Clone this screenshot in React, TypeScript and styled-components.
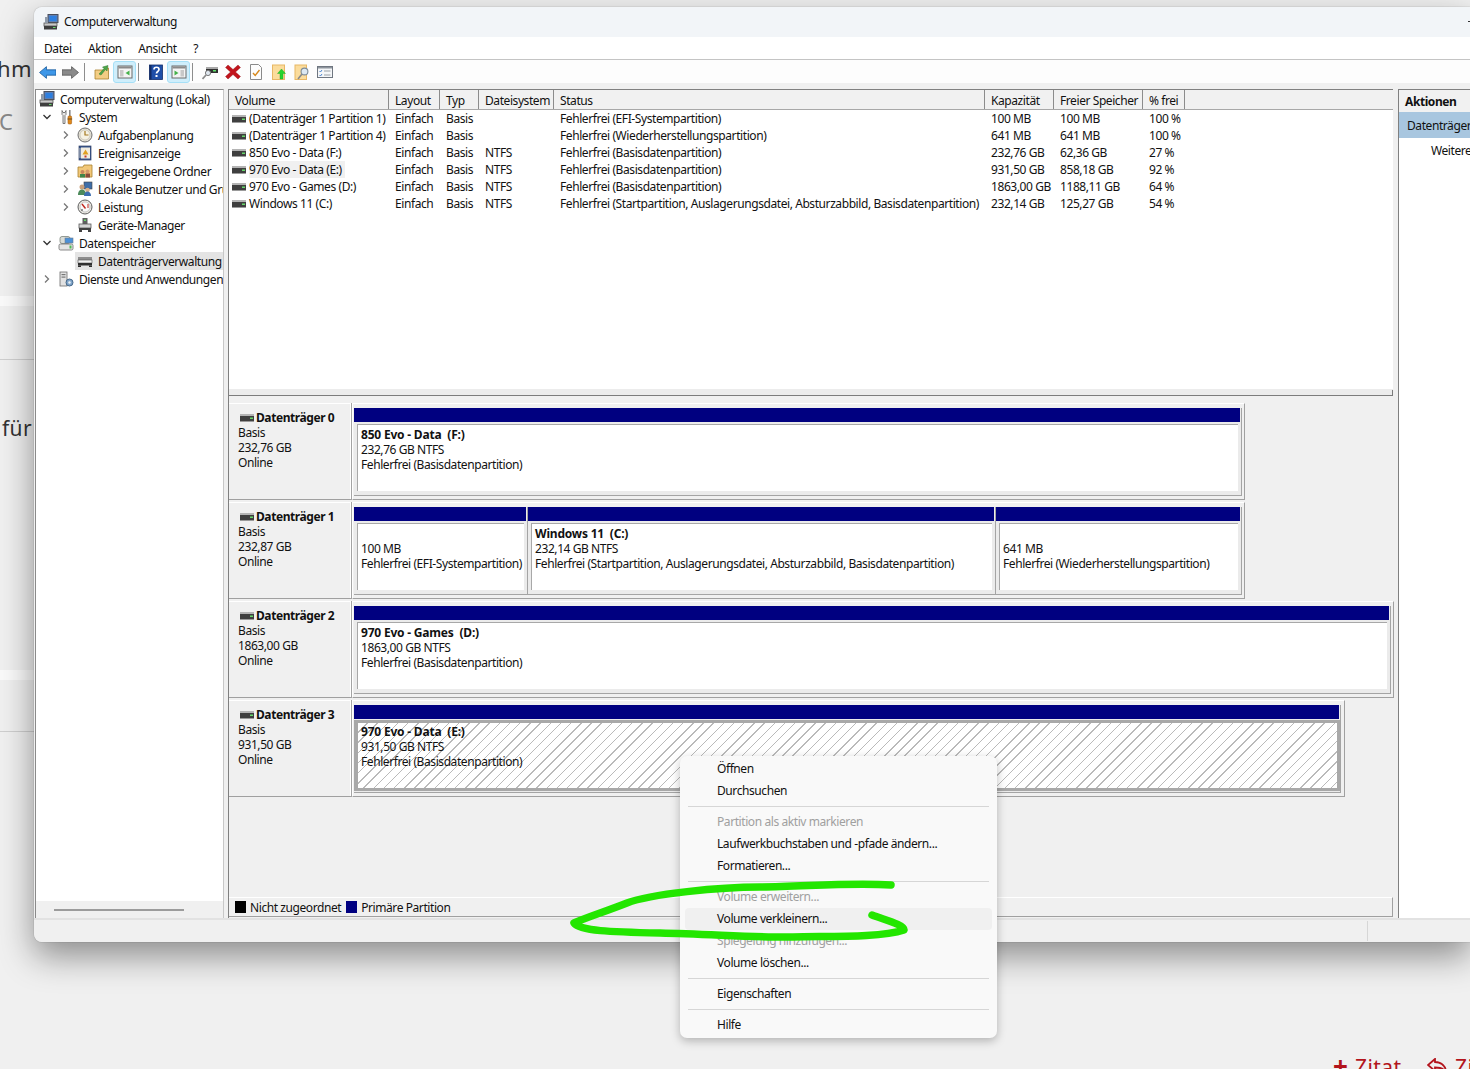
import React from 'react';
import styled, { createGlobalStyle } from 'styled-components';

const GlobalStyle = createGlobalStyle`
  html, body { margin: 0; padding: 0; background: #f0f0f0; }
  * { box-sizing: border-box; }
`;

const DiskGlyph = () => (
  <svg width="14" height="8" viewBox="0 0 14 8">
    <rect x="0" y="0" width="14" height="2" fill="#b4b4b4" />
    <rect x="0" y="2" width="14" height="5" fill="#3f3f3f" />
    <rect x="10" y="3.5" width="3" height="1.5" fill="#66d86a" />
    <rect x="0" y="7" width="14" height="1" fill="#9a9a9a" />
  </svg>
);

const glyphs: Record<string, React.ReactNode> = {
  computer: (
    <>
      <rect x="5" y="0.5" width="10" height="8" fill="#5d7fb5" stroke="#4a4f5c" />
      <rect x="6.5" y="2" width="7" height="5" fill="#2d7fe0" />
      <rect x="1" y="9" width="13" height="3" fill="#c9c9c9" stroke="#555" strokeWidth="0.8" />
      <rect x="1" y="12" width="13" height="3.5" fill="#3e3e3e" />
      <rect x="2" y="3" width="3" height="6" fill="#8f9aa8" />
      <rect x="10" y="13" width="2.5" height="1" fill="#66d86a" />
    </>
  ),
  tools: (
    <>
      <path d="M4 1.5v4l1 1v8h2v-8l1-1v-4l-1 2H5z" fill="#e8e8e8" stroke="#606060" strokeWidth="0.8" />
      <rect x="11" y="1" width="1.6" height="6" fill="#8a8a8a" />
      <rect x="10" y="7" width="3.6" height="8" rx="1" fill="#e08a1c" stroke="#a85f10" strokeWidth="0.6" />
      <rect x="9.5" y="9.5" width="4.6" height="1" fill="#6a4a1a" />
    </>
  ),
  clock: (
    <>
      <circle cx="8" cy="8" r="7" fill="#e6e2d6" stroke="#6f6f6f" />
      <circle cx="8" cy="8" r="5" fill="#f6f2e4" stroke="#b9b5a8" strokeWidth="0.6" />
      <path d="M8 4v4h3.5" fill="none" stroke="#a5781f" strokeWidth="1.2" />
    </>
  ),
  events: (
    <>
      <rect x="2" y="1" width="12" height="14" fill="#39588f" stroke="#2e3e63" strokeWidth="0.7" />
      <rect x="4" y="2.5" width="9" height="11" fill="#f0ece0" />
      <path d="M8.5 4.5l3 5h-6z" fill="#e0a020" />
      <rect x="7.5" y="10.5" width="2" height="2" fill="#c0392b" />
      <rect x="2.5" y="3" width="1" height="10" fill="#c8c8c8" />
    </>
  ),
  shared: (
    <>
      <path d="M1 4h5l1-2h8v12H1z" fill="#f2c879" stroke="#a8812f" strokeWidth="0.8" />
      <circle cx="5.5" cy="9" r="2" fill="#c9875c" />
      <rect x="3" y="11" width="5" height="3.5" fill="#41844a" />
      <circle cx="10.5" cy="8.5" r="2" fill="#d59a6c" />
      <rect x="8.5" y="10.5" width="4.5" height="4" fill="#8c4a3a" />
    </>
  ),
  users: (
    <>
      <rect x="7" y="1" width="8" height="7" fill="#3e6ea8" stroke="#444" strokeWidth="0.6" />
      <circle cx="5" cy="6" r="2.5" fill="#c9a07a" />
      <path d="M1 14c0-4 2-5.5 4-5.5S9 10 9 14z" fill="#4d8a5a" />
      <circle cx="10.5" cy="9" r="2.3" fill="#d8b08a" />
      <path d="M7 15c0-3 1.500-4.500 3.500-4.500S14 12 14 15z" fill="#3d6fb0" />
    </>
  ),
  gauge: (
    <>
      <circle cx="8" cy="8" r="7" fill="#eceae4" stroke="#5e5e5e" />
      <circle cx="8" cy="8" r="5" fill="#fafafa" stroke="#a9a9a9" strokeWidth="0.6" />
      <path d="M5 5l3.500 4.500" stroke="#c0261c" strokeWidth="1.4" />
      <path d="M11 5v4" stroke="#c0261c" strokeWidth="1" />
      <path d="M4 11h2" stroke="#3a3a3a" strokeWidth="1" />
    </>
  ),
  device: (
    <>
      <rect x="5.500" y="1" width="5" height="6" fill="#606060" />
      <rect x="7" y="2.500" width="2" height="1.500" fill="#66d86a" />
      <rect x="2" y="7" width="12" height="4" fill="#d6d6d6" stroke="#5a5a5a" strokeWidth="0.8" />
      <rect x="2" y="11" width="12" height="2" fill="#404040" />
      <rect x="2" y="13" width="3" height="2" fill="#404040" />
      <rect x="11" y="13" width="3" height="2" fill="#404040" />
    </>
  ),
  storage: (
    <>
      <rect x="2" y="1.500" width="10" height="7" rx="2" fill="#d8dcd8" stroke="#7c847c" strokeWidth="0.8" />
      <rect x="7" y="3" width="8" height="5" fill="#4a90d8" stroke="#6d7d90" strokeWidth="0.6" />
      <rect x="1" y="9" width="14" height="6" rx="1.500" fill="#e4e4e4" stroke="#6e6e6e" strokeWidth="0.8" />
      <rect x="11.500" y="10.500" width="2" height="3" fill="#4fbb55" />
    </>
  ),
  diskmgmt: (
    <>
      <rect x="1" y="4" width="14" height="3" fill="#8e8e8e" />
      <rect x="1" y="7" width="14" height="3" fill="#f0f0f0" stroke="#555" strokeWidth="0.6" />
      <rect x="1" y="10" width="14" height="2.500" fill="#2f2f2f" />
      <rect x="1" y="12.500" width="3" height="1.500" fill="#2f2f2f" />
      <rect x="12" y="12.500" width="3" height="1.500" fill="#2f2f2f" />
    </>
  ),
  services: (
    <>
      <rect x="2" y="1" width="7" height="14" fill="#e2e2e2" stroke="#6d6d6d" strokeWidth="0.8" />
      <rect x="3.500" y="3" width="4" height="1.200" fill="#777" />
      <rect x="3.500" y="5.500" width="4" height="1.200" fill="#777" />
      <circle cx="11.500" cy="11.500" r="3.500" fill="#7fa4c9" stroke="#48698a" />
      <circle cx="11.500" cy="11.500" r="1.200" fill="#eef3f8" />
    </>
  ),
  back: <path d="M0.500 8L7 2.500V5.500H16V10.500H7V13.500Z" fill="#3e97e8" stroke="#1e5f9e" strokeWidth="0.8" />,
  forward: <path d="M15.500 8L9 2.500V5.500H0V10.500H9V13.500Z" fill="#8a8a8a" stroke="#5c5c5c" strokeWidth="0.8" />,
  folderUp: (
    <>
      <path d="M1 6h9l1-2h3.500v11H1z" fill="#f3cd84" stroke="#a8812f" strokeWidth="0.8" />
      <path d="M5 10l5-5.500L8.500 3 14 1.500 13 7l-1.500-1.500L7 11z" fill="#4ea54a" stroke="#2f7a2f" strokeWidth="0.5" />
    </>
  ),
  panelLeft: (
    <>
      <rect x="1" y="2" width="14" height="12" fill="#f4f4f4" stroke="#6a6a6a" />
      <rect x="1.500" y="2.500" width="13" height="2" fill="#8a8a8a" />
      <rect x="3" y="6" width="3.500" height="6.500" fill="#c8c8c8" />
      <path d="M12.500 6.500v5L8.500 9z" fill="#45b24b" />
    </>
  ),
  panelRight: (
    <>
      <rect x="1" y="2" width="14" height="12" fill="#f4f4f4" stroke="#6a6a6a" />
      <rect x="1.500" y="2.500" width="13" height="2" fill="#8a8a8a" />
      <rect x="9.500" y="6" width="3.500" height="6.500" fill="#c8c8c8" />
      <path d="M3.500 6.500v5L7.500 9z" fill="#45b24b" />
    </>
  ),
  help: (
    <>
      <rect x="1.500" y="1" width="13" height="14.500" fill="#1f4fa8" stroke="#14306a" strokeWidth="0.8" />
      <rect x="1.500" y="1" width="2" height="14.500" fill="#122b63" />
      <path d="M6 5.500c0-3 5-3 5 0 0 2-2.500 2-2.500 4" fill="none" stroke="#fff" strokeWidth="1.700" />
      <rect x="7.500" y="11" width="2" height="2" fill="#fff" />
    </>
  ),
  connect: (
    <>
      <rect x="4" y="3" width="12" height="2" fill="#a8a8a8" />
      <rect x="4" y="5" width="12" height="4" fill="#303030" />
      <rect x="11" y="6" width="3" height="1.500" fill="#5fe06a" />
      <circle cx="6" cy="9" r="2.600" fill="#dfe7ef" stroke="#7b7b7b" />
      <path d="M4 11L0.500 15" stroke="#8b8b8b" strokeWidth="1.800" />
    </>
  ),
  remove: <path d="M3 1l5 4.500L13 1l2.500 2.500L10.500 8l5 4.500L13 15 8 10.500 3 15 .5 12.500 5.500 8 .5 3.500z" fill="#c2141c" stroke="#8f1016" strokeWidth="0.4" />,
  props: (
    <>
      <path d="M2.500 .5h8l3 3v12h-11z" fill="#fdfdfd" stroke="#8a8a8a" />
      <path d="M5 9l2.200 2.500L11.500 6" fill="none" stroke="#d88a1e" strokeWidth="1.400" />
    </>
  ),
  folderExport: (
    <>
      <rect x="1.500" y="1" width="12" height="14.500" fill="#fbdc9c" stroke="#e8b765" />
      <path d="M10.500 5l4 4.500H12V15H9V9.500H6.500z" fill="#27d52e" stroke="#1aa022" strokeWidth="0.4" />
    </>
  ),
  folderSearch: (
    <>
      <rect x="1" y="1" width="11.500" height="14.500" fill="#fbdc9c" stroke="#e8b765" />
      <circle cx="10.500" cy="7.500" r="3.400" fill="#dce8f2" stroke="#7d8c99" strokeWidth="1.100" />
      <path d="M8 10L4 15" stroke="#8a8a8a" strokeWidth="1.600" />
    </>
  ),
  checklist: (
    <>
      <rect x="0.500" y="2.500" width="15" height="11" fill="#f4f6f8" stroke="#6f7680" />
      <rect x="1" y="3" width="14" height="1.500" fill="#8d949c" />
      <path d="M2.500 7l1 1 1.500-2M2.500 11l1 1 1.500-2" fill="none" stroke="#3b79c9" strokeWidth="0.9" />
      <path d="M7 7h6.500M7 11h6.500" stroke="#9aa0a6" strokeWidth="1" />
    </>
  ),
};

const Glyph = ({ name, size = 16 }: { name: string; size?: number }) => (
  <svg width={size} height={size} viewBox="0 0 16 16">
    {glyphs[name]}
  </svg>
);

const Chevron = ({ open }: { open: boolean }) => (
  <svg width="10" height="10" viewBox="0 0 10 10">
    <path
      d={open ? 'M1.500 3l3.500 3.500L8.500 3' : 'M3 1.500L6.500 5 3 8.500'}
      fill="none"
      stroke={open ? '#333' : '#777'}
      strokeWidth="1.300"
    />
  </svg>
);

const treeRows = [
  { label: 'Computerverwaltung (Lokal)', icon: 'computer', depth: 0 },
  { label: 'System', icon: 'tools', depth: 1, chevron: 'open' },
  { label: 'Aufgabenplanung', icon: 'clock', depth: 2, chevron: 'closed' },
  { label: 'Ereignisanzeige', icon: 'events', depth: 2, chevron: 'closed' },
  { label: 'Freigegebene Ordner', icon: 'shared', depth: 2, chevron: 'closed' },
  { label: 'Lokale Benutzer und Gruppen', icon: 'users', depth: 2, chevron: 'closed' },
  { label: 'Leistung', icon: 'gauge', depth: 2, chevron: 'closed' },
  { label: 'Geräte-Manager', icon: 'device', depth: 2 },
  { label: 'Datenspeicher', icon: 'storage', depth: 1, chevron: 'open' },
  { label: 'Datenträgerverwaltung', icon: 'diskmgmt', depth: 2, selected: true },
  { label: 'Dienste und Anwendungen', icon: 'services', depth: 1, chevron: 'closed' },
];

const columns = ['Volume', 'Layout', 'Typ', 'Dateisystem', 'Status', 'Kapazität', 'Freier Speicher', '% frei'];

const volumes = [
  ['(Datenträger 1 Partition 1)', 'Einfach', 'Basis', '', 'Fehlerfrei (EFI-Systempartition)', '100 MB', '100 MB', '100 %'],
  ['(Datenträger 1 Partition 4)', 'Einfach', 'Basis', '', 'Fehlerfrei (Wiederherstellungspartition)', '641 MB', '641 MB', '100 %'],
  ['850 Evo - Data (F:)', 'Einfach', 'Basis', 'NTFS', 'Fehlerfrei (Basisdatenpartition)', '232,76 GB', '62,36 GB', '27 %'],
  ['970 Evo - Data (E:)', 'Einfach', 'Basis', 'NTFS', 'Fehlerfrei (Basisdatenpartition)', '931,50 GB', '858,18 GB', '92 %'],
  ['970 Evo - Games (D:)', 'Einfach', 'Basis', 'NTFS', 'Fehlerfrei (Basisdatenpartition)', '1863,00 GB', '1188,11 GB', '64 %'],
  ['Windows 11 (C:)', 'Einfach', 'Basis', 'NTFS', 'Fehlerfrei (Startpartition, Auslagerungsdatei, Absturzabbild, Basisdatenpartition)', '232,14 GB', '125,27 GB', '54 %'],
];

const disks = [
  {
    name: 'Datenträger 0',
    size: '232,76 GB',
    width: 893,
    parts: [{ title: '850 Evo - Data  (F:)', size: '232,76 GB NTFS', status: 'Fehlerfrei (Basisdatenpartition)', width: 888 }],
  },
  {
    name: 'Datenträger 1',
    size: '232,87 GB',
    width: 893,
    parts: [
      { title: '', size: '100 MB', status: 'Fehlerfrei (EFI-Systempartition)', width: 174 },
      { title: 'Windows 11  (C:)', size: '232,14 GB NTFS', status: 'Fehlerfrei (Startpartition, Auslagerungsdatei, Absturzabbild, Basisdatenpartition)', width: 468 },
      { title: '', size: '641 MB', status: 'Fehlerfrei (Wiederherstellungspartition)', width: 246 },
    ],
  },
  {
    name: 'Datenträger 2',
    size: '1863,00 GB',
    width: 1042,
    parts: [{ title: '970 Evo - Games  (D:)', size: '1863,00 GB NTFS', status: 'Fehlerfrei (Basisdatenpartition)', width: 1038 }],
  },
  {
    name: 'Datenträger 3',
    size: '931,50 GB',
    width: 993,
    parts: [{ title: '970 Evo - Data  (E:)', size: '931,50 GB NTFS', status: 'Fehlerfrei (Basisdatenpartition)', width: 987, selected: true }],
  },
];

const menuGroups = [
  [{ label: 'Öffnen' }, { label: 'Durchsuchen' }],
  [
    { label: 'Partition als aktiv markieren', disabled: true },
    { label: 'Laufwerkbuchstaben und -pfade ändern...' },
    { label: 'Formatieren...' },
  ],
  [
    { label: 'Volume erweitern...', disabled: true },
    { label: 'Volume verkleinern...', hover: true },
    { label: 'Spiegelung hinzufügen...', disabled: true },
    { label: 'Volume löschen...' },
  ],
  [{ label: 'Eigenschaften' }],
  [{ label: 'Hilfe' }],
];

const App = () => (
  <Page>
    <GlobalStyle />
    <BackdropText $x={-3} $y={53} $size={22}>hm</BackdropText>
    <BackdropText $x={-1} $y={106} $size={22} $faded>C</BackdropText>
    <BackdropText $x={2} $y={413} $size={21}>für</BackdropText>
    <BackdropBand $y={296} $height={10} $color="#fafafa" />
    <BackdropBand $y={359} $height={1} $color="#cfcfcf" />
    <BackdropBand $y={670} $height={10} $color="#fafafa" />
    <BackdropBand $y={731} $height={1} $color="#cfcfcf" />
    <BackdropText $x={1333} $y={1051} $size={26} $red $bold>+</BackdropText>
    <BackdropText $x={1355} $y={1052} $size={21} $red>Zitat</BackdropText>
    <ReplyArrow width="22" height="16" viewBox="0 0 22 16">
      <path d="M8 1L1 7l7 6V9.500c5 0 9 1 11 5 0-6-4-10-11-10.500z" fill="none" stroke="#b3141c" strokeWidth="1.800" />
    </ReplyArrow>
    <BackdropText $x={1455} $y={1052} $size={21} $red>Zi</BackdropText>

    <Window>
      <TitleBar>
        <Glyph name="computer" />
        <span>Computerverwaltung</span>
        <TitleDash />
      </TitleBar>
      <MenuBar>
        <span>Datei</span>
        <span>Aktion</span>
        <span>Ansicht</span>
        <span>?</span>
      </MenuBar>
      <ToolBar>
        <ToolButton><Glyph name="back" size={17} /></ToolButton>
        <ToolButton><Glyph name="forward" size={17} /></ToolButton>
        <ToolSeparator />
        <ToolButton><Glyph name="folderUp" /></ToolButton>
        <ToolButton $active><Glyph name="panelLeft" /></ToolButton>
        <ToolSeparator />
        <ToolButton><Glyph name="help" /></ToolButton>
        <ToolButton $active><Glyph name="panelRight" /></ToolButton>
        <ToolSeparator />
        <ToolButton><Glyph name="connect" /></ToolButton>
        <ToolButton><Glyph name="remove" /></ToolButton>
        <ToolButton><Glyph name="props" /></ToolButton>
        <ToolButton><Glyph name="folderExport" /></ToolButton>
        <ToolButton><Glyph name="folderSearch" /></ToolButton>
        <ToolButton><Glyph name="checklist" /></ToolButton>
      </ToolBar>

      <Content>
        <TreePane>
          <TreeList>
            {treeRows.map((row) => (
              <TreeRow key={row.label} $depth={row.depth}>
                {row.depth > 0 && (
                  <ChevronBox>{row.chevron && <Chevron open={row.chevron === 'open'} />}</ChevronBox>
                )}
                <TreeLabel $selected={row.selected}>
                  <Glyph name={row.icon} />
                  <span>{row.label}</span>
                </TreeLabel>
              </TreeRow>
            ))}
          </TreeList>
          <TreeScroll>
            <TreeThumb />
          </TreeScroll>
        </TreePane>

        <CenterPane>
          <TablePane>
            <VolumeTable>
              <HeaderRow>
                {columns.map((col) => (
                  <HeaderCell key={col}>{col}</HeaderCell>
                ))}
              </HeaderRow>
              {volumes.map((row) => (
                <VolumeRow key={row[0]}>
                  {row.map((cell, i) =>
                    i === 0 ? (
                      <VolumeName key={i}>
                        <DiskGlyph />
                        <VolumeText $selected={cell.startsWith('970 Evo - Data')}>{cell}</VolumeText>
                      </VolumeName>
                    ) : (
                      <Cell key={i}>{cell}</Cell>
                    ),
                  )}
                </VolumeRow>
              ))}
            </VolumeTable>
          </TablePane>

          <DiskPane>
            <DiskList>
              {disks.map((disk) => (
                <DiskRow key={disk.name}>
                  <DiskLabel>
                    <DiskTitle>
                      <DiskGlyph />
                      <b>{disk.name}</b>
                    </DiskTitle>
                    <div>Basis</div>
                    <div>{disk.size}</div>
                    <div>Online</div>
                  </DiskLabel>
                  <DiskTrack $width={disk.width}>
                    {disk.parts.map((part) => (
                      <Partition key={part.size} $width={part.width}>
                        <PartitionBar />
                        <PartitionBody $selected={part.selected}>
                          <PartitionTitle>{part.title}</PartitionTitle>
                          <PartitionLine>{part.size}</PartitionLine>
                          <PartitionLine>{part.status}</PartitionLine>
                        </PartitionBody>
                      </Partition>
                    ))}
                  </DiskTrack>
                </DiskRow>
              ))}
            </DiskList>
            <Legend>
              <LegendSwatch $color="#000" />
              <span>Nicht zugeordnet</span>
              <LegendSwatch $color="#000080" />
              <span>Primäre Partition</span>
            </Legend>
          </DiskPane>
        </CenterPane>

        <ActionPane>
          <ActionHeader>Aktionen</ActionHeader>
          <ActionGroup>Datenträgerverwaltung</ActionGroup>
          <ActionItem>Weitere Aktionen</ActionItem>
        </ActionPane>
      </Content>

      <StatusBar>
        <StatusDivider />
      </StatusBar>
    </Window>

    <ContextMenu>
      {menuGroups.map((group, i) => (
        <React.Fragment key={group[0].label}>
          {i > 0 && <MenuSeparator />}
          {group.map((item) => (
            <MenuItem key={item.label} $disabled={item.disabled} $hover={item.hover}>
              {item.label}
            </MenuItem>
          ))}
        </React.Fragment>
      ))}
    </ContextMenu>

    <Scribble viewBox="0 0 1470 1069">
      <path
        d="M891 885C850 882 800 887 760 887S650 894 627 903S585 918 574 923C580 931 610 932 660 933S760 938 793 937S880 938 904 930C905 925 885 920 872 915"
        fill="none"
        stroke="#23e600"
        strokeWidth="7.500"
        strokeLinecap="round"
        strokeLinejoin="round"
      />
    </Scribble>
  </Page>
);

export default App;

const uiFont = `"Noto Sans", "Liberation Sans", sans-serif`;

const Page = styled.div`
  position: relative;
  width: 1470px;
  height: 1069px;
  padding: 7px 0 0 34px;
  overflow: hidden;
  background: #f0f0f0;
  font-family: ${uiFont};
  font-size: 12px;
  letter-spacing: -0.42px;
  color: #111;
`;

const BackdropText = styled.div<{ $x: number; $y: number; $size: number; $faded?: boolean; $red?: boolean; $bold?: boolean }>`
  position: absolute;
  left: ${(p) => p.$x}px;
  top: ${(p) => p.$y}px;
  font-size: ${(p) => p.$size}px;
  font-weight: ${(p) => (p.$bold ? 700 : 400)};
  line-height: 30px;
  letter-spacing: 0.4px;
  white-space: nowrap;
  color: ${(p) => (p.$red ? '#b3141c' : p.$faded ? '#888' : '#333')};
`;

const BackdropBand = styled.div<{ $y: number; $height: number; $color: string }>`
  position: absolute;
  left: 0;
  top: ${(p) => p.$y}px;
  width: 34px;
  height: ${(p) => p.$height}px;
  background: ${(p) => p.$color};
`;

const ReplyArrow = styled.svg`
  position: absolute;
  left: 1427px;
  top: 1058px;
`;

const Window = styled.div`
  position: relative;
  display: flex;
  flex-direction: column;
  width: 1436px;
  height: 935px;
  background: #f0f0f0;
  border-radius: 8px 0 0 8px;
  box-shadow: 0 14px 34px rgba(0, 0, 0, 0.42), 0 0 1px rgba(0, 0, 0, 0.5);
  overflow: hidden;
`;

const TitleBar = styled.div`
  display: flex;
  align-items: center;
  gap: 5px;
  height: 30px;
  padding: 0 0 1px 9px;
  background: #f2f5f8;
`;

const TitleDash = styled.div`
  width: 2px;
  height: 1px;
  margin-left: auto;
  background: #333;
`;

const MenuBar = styled.div`
  display: flex;
  align-items: center;
  gap: 16.500px;
  height: 23px;
  padding-left: 10px;
  background: #fff;
  border-bottom: 1px solid #c4c4c4;
`;

const ToolBar = styled.div`
  display: flex;
  align-items: center;
  height: 23px;
  padding: 1px 0 0 2px;
  background: #fdfdfd;
`;

const ToolButton = styled.div<{ $active?: boolean }>`
  display: flex;
  align-items: center;
  justify-content: center;
  width: 23px;
  height: 22px;
  border-radius: 3px;
  background: ${(p) => (p.$active ? '#cfeefb' : 'transparent')};
  border: 1px solid ${(p) => (p.$active ? '#a6e0f7' : 'transparent')};
`;

const ToolSeparator = styled.div`
  width: 1px;
  height: 18px;
  margin: 0 5px 0 2px;
  background: #8d8d8d;
`;

const Content = styled.div`
  display: flex;
  flex: 1;
  min-height: 0;
  padding: 6px 0 0 1px;
  gap: 4px;
`;

const TreePane = styled.div`
  display: flex;
  flex-direction: column;
  width: 189px;
  background: #fff;
  border-top: 1px solid #8a8a8a;
  border-left: 1px solid #8a8a8a;
  border-right: 1px solid #c8c8c8;
`;

const TreeList = styled.div`
  flex: 1;
`;

const TreeRow = styled.div<{ $depth: number }>`
  display: flex;
  align-items: center;
  height: 18px;
  overflow: hidden;
  white-space: nowrap;
  padding-left: ${(p) => [1, 5, 24][p.$depth]}px;
`;

const ChevronBox = styled.div`
  display: flex;
  flex: none;
  align-items: center;
  justify-content: center;
  width: 12px;
  height: 12px;
  margin-right: 3px;
`;

const TreeLabel = styled.div<{ $selected?: boolean }>`
  display: flex;
  align-items: center;
  gap: 5px;
  padding-left: 2px;
  padding-right: 2px;
  height: 18px;
  background: ${(p) => (p.$selected ? '#e4e4e4' : 'transparent')};
`;

const TreeScroll = styled.div`
  display: flex;
  align-items: center;
  height: 17px;
  padding-left: 18px;
  background: #f0f0f0;
`;

const TreeThumb = styled.div`
  width: 130px;
  height: 2px;
  background: #9c9c9c;
`;

const CenterPane = styled.div`
  display: flex;
  flex-direction: column;
  width: 1166px;
  border-left: 1px solid #808080;
`;

const TablePane = styled.div`
  position: relative;
  height: 307px;
  margin-right: 1px;
  padding-bottom: 6px;
  background: #ececec;
  border-top: 1px solid #808080;
  border-bottom: 1px solid #7c7c7c;

  &::after {
    content: '';
    position: absolute;
    right: 0;
    bottom: 0;
    width: 1px;
    height: 5px;
    background: #7c7c7c;
  }
`;

const VolumeTable = styled.div`
  height: 100%;
  background: #fff;
`;

const tableColumns = '160px 51px 39px 75px 431px 69px 89px 42px';

const HeaderRow = styled.div`
  display: grid;
  grid-template-columns: ${tableColumns};
  height: 20px;
  background: #f1f1f1;
  border-bottom: 1px solid #a8a8a8;
`;

const HeaderCell = styled.div`
  display: flex;
  align-items: center;
  padding: 2px 0 0 6px;
  white-space: nowrap;
  border-right: 1px solid #8c8c8c;
`;

const VolumeRow = styled.div`
  display: grid;
  grid-template-columns: ${tableColumns};
  height: 17px;
  align-items: center;
`;

const Cell = styled.div`
  padding-left: 6px;
  white-space: nowrap;
`;

const VolumeName = styled.div`
  display: flex;
  align-items: center;
  padding-left: 3px;
  white-space: nowrap;
`;

const VolumeText = styled.span<{ $selected?: boolean }>`
  margin-left: 3px;
  padding-right: 3px;
  background: ${(p) => (p.$selected ? '#f0f0f0' : 'transparent')};
`;

const DiskPane = styled.div`
  display: flex;
  flex: 1;
  flex-direction: column;
  min-height: 0;
  padding-top: 7px;
`;

const DiskList = styled.div`
  display: flex;
  flex-direction: column;
  gap: 2px;
`;

const DiskRow = styled.div`
  display: flex;
  height: 97px;
`;

const DiskLabel = styled.div`
  width: 123px;
  padding: 7px 0 0 9px;
  line-height: 15px;
  border-right: 1px solid #a4a4a4;
  border-bottom: 1px solid #a0a0a0;
  box-shadow: inset -1px 0 0 #fff, inset 0 1px 0 #fff;
`;

const DiskTitle = styled.div`
  display: flex;
  align-items: center;
  gap: 2px;
  padding-left: 2px;
  font-size: 12px;
`;

const DiskTrack = styled.div<{ $width: number }>`
  display: flex;
  width: ${(p) => p.$width}px;
  padding: 4px 2px 3px 1px;
  border-top: 1px solid #fff;
  border-left: 1px solid #fff;
  border-right: 1px solid #a0a0a0;
  border-bottom: 1px solid #a0a0a0;
`;

const Partition = styled.div<{ $width: number }>`
  display: flex;
  flex-direction: column;
  width: ${(p) => p.$width}px;
  background: #ebebeb;
  border-right: 1px solid #a4a4a4;
  border-bottom: 1px solid #a4a4a4;
`;

const PartitionBar = styled.div`
  flex: none;
  height: 14px;
  margin-right: 1px;
  background: #000080;
`;

const PartitionBody = styled.div<{ $selected?: boolean }>`
  flex: 1;
  margin: ${(p) => (p.$selected ? '1px 0 1px 0' : '2px 3px 4px 3px')};
  padding: ${(p) => (p.$selected ? '1px 0 0 3px' : '2px 0 0 3px')};
  line-height: 15px;
  overflow: hidden;
  white-space: nowrap;
  background: ${(p) =>
    p.$selected
      ? 'repeating-linear-gradient(135deg, #fff 0 6.200px, #bababa 6.200px 7.200px)'
      : '#fff'};
  border-style: solid;
  border-color: ${(p) => (p.$selected ? '#a8a8a8' : '#a8a8a8 #fff #fff #a8a8a8')};
  border-width: ${(p) => (p.$selected ? '3px 3px 3px 4px' : '1px 0 0 1px')};
`;

const PartitionTitle = styled.div`
  min-height: 15px;
  font-weight: 700;
  letter-spacing: -0.2px;
  white-space: pre;
`;

const PartitionLine = styled.div`
  min-height: 15px;
`;

const Legend = styled.div`
  display: flex;
  align-items: center;
  height: 20px;
  margin-top: auto;
  margin-bottom: 1px;
  margin-right: 1px;
  padding-left: 6px;
  border-top: 1px solid #fff;
  border-right: 1px solid #a0a0a0;
  border-bottom: 1px solid #a0a0a0;

  span {
    margin-right: 5px;
  }
`;

const LegendSwatch = styled.div<{ $color: string }>`
  width: 11px;
  height: 12px;
  margin-right: 4px;
  background: ${(p) => p.$color};
`;

const ActionPane = styled.div`
  flex: 1;
  min-width: 0;
  overflow: hidden;
  white-space: nowrap;
  background: #fff;
  border-top: 1px solid #808080;
  border-left: 1px solid #808080;
`;

const ActionHeader = styled.div`
  display: flex;
  align-items: center;
  height: 22px;
  padding-left: 6px;
  font-weight: 700;
  background: #f1f1f1;
`;

const ActionGroup = styled.div`
  display: flex;
  align-items: center;
  height: 26px;
  padding-left: 8px;
  background: #a8c6df;
`;

const ActionItem = styled.div`
  display: flex;
  align-items: center;
  height: 24px;
  padding-left: 32px;
`;

const StatusBar = styled.div`
  display: flex;
  justify-content: flex-end;
  align-items: center;
  height: 24px;
  padding-right: 102px;
  border-top: 2px solid #e2e2e2;
  background: #f0f0f0;
`;

const StatusDivider = styled.div`
  width: 1px;
  height: 20px;
  background: #d6d6d6;
`;

const ContextMenu = styled.div`
  position: absolute;
  left: 680px;
  top: 756px;
  width: 317px;
  padding: 2px 0;
  background: #f9f9f9;
  border-radius: 7px;
  box-shadow: 0 3px 10px rgba(0, 0, 0, 0.26);
`;

const MenuItem = styled.div<{ $disabled?: boolean; $hover?: boolean }>`
  display: flex;
  align-items: center;
  height: 22px;
  margin: 0 5px;
  padding: 0 0 2px 32px;
  border-radius: 4px;
  color: ${(p) => (p.$disabled ? '#a0a0a0' : '#111')};
  background: ${(p) => (p.$hover ? '#f0f0f0' : 'transparent')};
`;

const MenuSeparator = styled.div`
  height: 1px;
  margin: 4px 8px;
  background: #d6d6d6;
`;

const Scribble = styled.svg`
  position: absolute;
  left: 0;
  top: 0;
  width: 1470px;
  height: 1069px;
  pointer-events: none;
`;
